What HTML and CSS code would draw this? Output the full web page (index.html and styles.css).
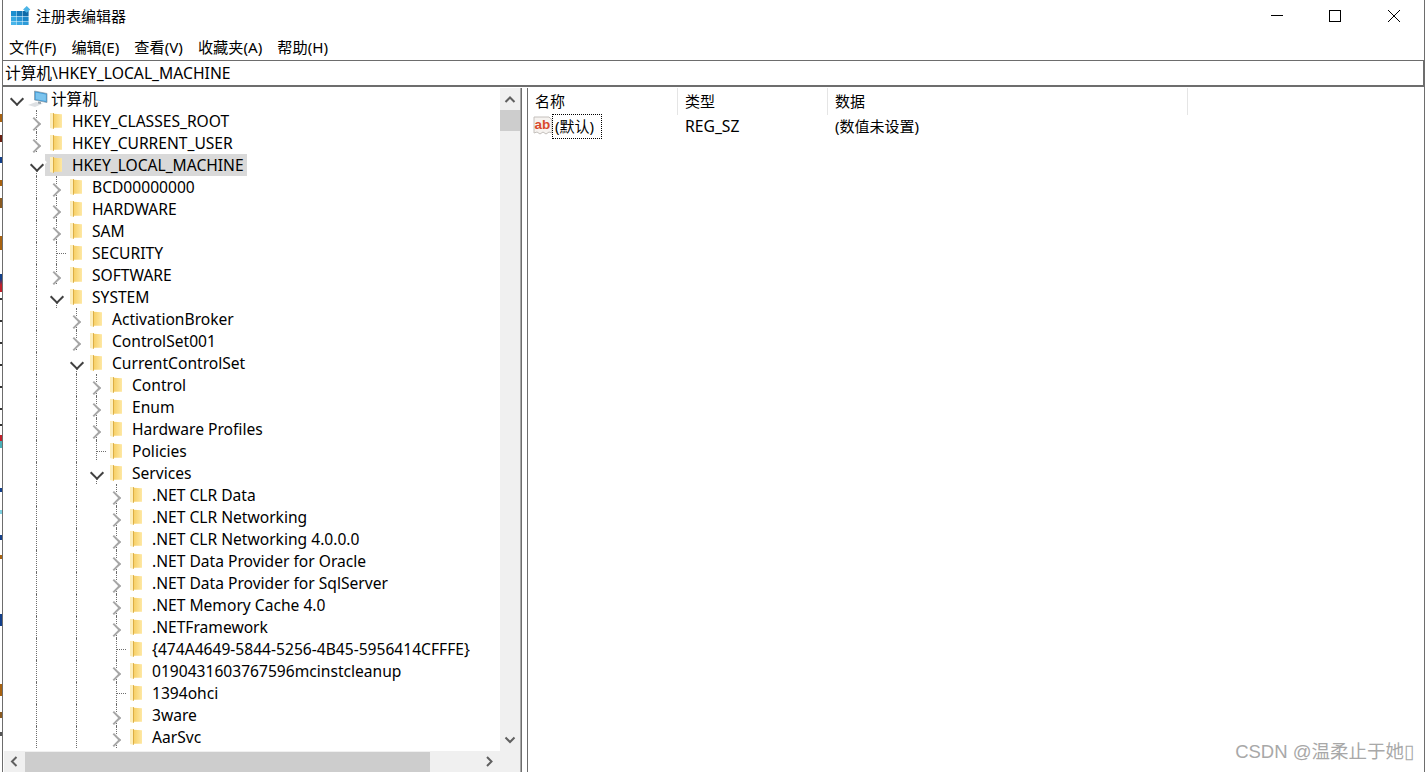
FILE: index.html
```html
<!DOCTYPE html>
<html lang="zh-CN">
<head>
<meta charset="utf-8">
<title>注册表编辑器</title>
<link rel="stylesheet" href="styles.css">
</head>
<body>
<div class="edge"></div>
<div class="window">
  <header class="titlebar">
    <svg class="app-icon" width="20" height="20" viewBox="0 0 20 20"><rect x="0" y="5" width="5.6" height="5" fill="#1a8fd0"/><rect x="6" y="5" width="5.6" height="5" fill="#1578b8"/><rect x="12" y="5" width="5.6" height="5" fill="#0f6aa8"/><rect x="0" y="10.5" width="5.6" height="4.6" fill="#34a7e0"/><rect x="6" y="10.5" width="5.6" height="4.6" fill="#2a96d6"/><rect x="12" y="10.5" width="5.6" height="4.6" fill="#1a86c8"/><rect x="0" y="15.5" width="5.6" height="3.5" fill="#47b5ea"/><rect x="6" y="15.5" width="5.6" height="3.5" fill="#3aa8e2"/><rect x="12" y="15.5" width="5.6" height="3.5" fill="#2c9ad8"/><path d="M15.7 0l3.6 3.4-3.6 3.4-3.6-3.4z" fill="#4db4e6"/></svg>
    <span class="title">注册表编辑器</span>
    <div class="controls">
      <svg width="12" height="12" viewBox="0 0 12 12"><path d="M0 5.5h12" stroke="#000" fill="none"/></svg>
      <svg width="12" height="12" viewBox="0 0 12 12"><rect x=".5" y=".5" width="11" height="11" stroke="#000" fill="none"/></svg>
      <svg class="close" width="12" height="12" viewBox="0 0 12 12"><path d="M0 0l12 12M12 0L0 12" stroke="#000" fill="none"/></svg>
    </div>
  </header>
  <nav class="menubar"><span>文件(F)</span><span>编辑(E)</span><span>查看(V)</span><span>收藏夹(A)</span><span>帮助(H)</span></nav>
  <div class="address">计算机\HKEY_LOCAL_MACHINE</div>
  <main class="panes">
    <section class="tree-pane">
      <div class="tree-col">
        <div class="tree">
          <div class="row"><span class="tog open"></span><svg class="pc" width="20" height="18" viewBox="0 0 20 18"><path d="M6.5 1l12.5 2.500v9L6.500 10z" fill="#3f9bd8" stroke="#8a98a4" stroke-width=".7"/><path d="M7.700 2.600l10.200 2v6.400L7.700 9.200z" fill="#7cc4ee"/><path d="M0 15l8-3 7 1.600-8 3.400z" fill="#dde0e3"/><path d="M10 11.500v2l3 .5v-2z" fill="#9aa5ad"/></svg><span class="lab root">计算机</span></div>
          <div class="row"><span class="g"></span><span class="tog closed"></span><span class="fold"></span><span class="lab">HKEY_CLASSES_ROOT</span></div>
          <div class="row"><span class="g"></span><span class="tog closed"></span><span class="fold"></span><span class="lab">HKEY_CURRENT_USER</span></div>
          <div class="row"><span class="g"></span><span class="tog open"></span><span class="item sel"><span class="fold"></span><span class="lab">HKEY_LOCAL_MACHINE</span></span></div>
          <div class="row"><span class="g"></span><span class="g v"></span><span class="tog closed"></span><span class="fold"></span><span class="lab">BCD00000000</span></div>
          <div class="row"><span class="g"></span><span class="g v"></span><span class="tog closed"></span><span class="fold"></span><span class="lab">HARDWARE</span></div>
          <div class="row"><span class="g"></span><span class="g v"></span><span class="tog closed"></span><span class="fold"></span><span class="lab">SAM</span></div>
          <div class="row"><span class="g"></span><span class="g v"></span><span class="tog leaf"></span><span class="fold"></span><span class="lab">SECURITY</span></div>
          <div class="row"><span class="g"></span><span class="g v"></span><span class="tog closed"></span><span class="fold"></span><span class="lab">SOFTWARE</span></div>
          <div class="row"><span class="g"></span><span class="g v"></span><span class="tog open"></span><span class="fold"></span><span class="lab">SYSTEM</span></div>
          <div class="row"><span class="g"></span><span class="g v"></span><span class="g"></span><span class="tog closed"></span><span class="fold"></span><span class="lab">ActivationBroker</span></div>
          <div class="row"><span class="g"></span><span class="g v"></span><span class="g"></span><span class="tog closed"></span><span class="fold"></span><span class="lab">ControlSet001</span></div>
          <div class="row"><span class="g"></span><span class="g v"></span><span class="g"></span><span class="tog open"></span><span class="fold"></span><span class="lab">CurrentControlSet</span></div>
          <div class="row"><span class="g"></span><span class="g v"></span><span class="g"></span><span class="g v"></span><span class="tog closed"></span><span class="fold"></span><span class="lab">Control</span></div>
          <div class="row"><span class="g"></span><span class="g v"></span><span class="g"></span><span class="g v"></span><span class="tog closed"></span><span class="fold"></span><span class="lab">Enum</span></div>
          <div class="row"><span class="g"></span><span class="g v"></span><span class="g"></span><span class="g v"></span><span class="tog closed"></span><span class="fold"></span><span class="lab">Hardware Profiles</span></div>
          <div class="row"><span class="g"></span><span class="g v"></span><span class="g"></span><span class="g v"></span><span class="tog leaf"></span><span class="fold"></span><span class="lab">Policies</span></div>
          <div class="row"><span class="g"></span><span class="g v"></span><span class="g"></span><span class="g v"></span><span class="tog open"></span><span class="fold"></span><span class="lab">Services</span></div>
          <div class="row"><span class="g"></span><span class="g v"></span><span class="g"></span><span class="g v"></span><span class="g"></span><span class="tog closed"></span><span class="fold"></span><span class="lab">.NET CLR Data</span></div>
          <div class="row"><span class="g"></span><span class="g v"></span><span class="g"></span><span class="g v"></span><span class="g"></span><span class="tog closed"></span><span class="fold"></span><span class="lab">.NET CLR Networking</span></div>
          <div class="row"><span class="g"></span><span class="g v"></span><span class="g"></span><span class="g v"></span><span class="g"></span><span class="tog closed"></span><span class="fold"></span><span class="lab">.NET CLR Networking 4.0.0.0</span></div>
          <div class="row"><span class="g"></span><span class="g v"></span><span class="g"></span><span class="g v"></span><span class="g"></span><span class="tog closed"></span><span class="fold"></span><span class="lab">.NET Data Provider for Oracle</span></div>
          <div class="row"><span class="g"></span><span class="g v"></span><span class="g"></span><span class="g v"></span><span class="g"></span><span class="tog closed"></span><span class="fold"></span><span class="lab">.NET Data Provider for SqlServer</span></div>
          <div class="row"><span class="g"></span><span class="g v"></span><span class="g"></span><span class="g v"></span><span class="g"></span><span class="tog closed"></span><span class="fold"></span><span class="lab">.NET Memory Cache 4.0</span></div>
          <div class="row"><span class="g"></span><span class="g v"></span><span class="g"></span><span class="g v"></span><span class="g"></span><span class="tog closed"></span><span class="fold"></span><span class="lab">.NETFramework</span></div>
          <div class="row"><span class="g"></span><span class="g v"></span><span class="g"></span><span class="g v"></span><span class="g"></span><span class="tog leaf"></span><span class="fold"></span><span class="lab">{474A4649-5844-5256-4B45-5956414CFFFE}</span></div>
          <div class="row"><span class="g"></span><span class="g v"></span><span class="g"></span><span class="g v"></span><span class="g"></span><span class="tog closed"></span><span class="fold"></span><span class="lab">0190431603767596mcinstcleanup</span></div>
          <div class="row"><span class="g"></span><span class="g v"></span><span class="g"></span><span class="g v"></span><span class="g"></span><span class="tog leaf"></span><span class="fold"></span><span class="lab">1394ohci</span></div>
          <div class="row"><span class="g"></span><span class="g v"></span><span class="g"></span><span class="g v"></span><span class="g"></span><span class="tog closed"></span><span class="fold"></span><span class="lab">3ware</span></div>
          <div class="row"><span class="g"></span><span class="g v"></span><span class="g"></span><span class="g v"></span><span class="g"></span><span class="tog closed"></span><span class="fold"></span><span class="lab">AarSvc</span></div>
        </div>
        <div class="hscroll">
          <svg width="21" height="21" viewBox="0 0 21 21"><path d="M12.500 6l-4.500 4.500 4.500 4.500" stroke="#606060" stroke-width="2" fill="none"/></svg>
          <div class="hthumb"></div>
          <div class="spacer"></div>
          <svg width="21" height="21" viewBox="0 0 21 21"><path d="M8 6l4.500 4.500L8 15" stroke="#606060" stroke-width="2" fill="none"/></svg>
        </div>
      </div>
      <div class="vscroll">
        <svg width="20" height="22" viewBox="0 0 20 22"><path d="M5.500 14l4.500-4.500 4.500 4.500" stroke="#606060" stroke-width="2" fill="none"/></svg>
        <div class="vthumb"></div>
        <div class="spacer"></div>
        <svg width="20" height="22" viewBox="0 0 20 22"><path d="M5.500 8.500l4.500 4.500 4.500-4.500" stroke="#606060" stroke-width="2" fill="none"/></svg>
        <div class="corner"></div>
      </div>
    </section>
    <div class="sash"></div>
    <section class="list-pane">
      <div class="list-head"><span class="col">名称</span><span class="col">类型</span><span class="col wide">数据</span></div>
      <div class="list-row">
        <svg class="ab" width="20" height="20" viewBox="0 0 20 20"><path d="M1 1h15l3 3v13l-3-1-3 2-3-2-3 2-3-2-3 1z" fill="#f6f3f0" stroke="#c4c0bc"/><text x="1.500" y="13" class="ab-text">ab</text></svg>
        <span class="focus">(默认)</span>
        <span class="type">REG_SZ</span>
        <span class="data">(数值未设置)</span>
      </div>
      <div class="watermark">CSDN @温柔止于她&#9647;</div>
    </section>
  </main>
</div>
</body>
</html>
```
FILE: styles.css
```css
* { box-sizing: border-box; }
html, body { margin: 0; height: 100%; overflow: hidden; background: #fff; }
body { display: flex; font: 15.6px/22px "Noto Sans", "Noto Sans CJK SC", sans-serif; color: #000; }
.edge { width: 2px; flex: none; background: linear-gradient(#fff 0 114px, #a8620f 114px 122px, #fff 122px 135px, #6a1f10 135px 142px, #fff 142px 157px, #123f8a 157px 163px, #fff 163px 180px, #a8620f 180px 186px, #fff 186px 198px, #8a5a20 198px 208px, #fff 208px 236px, #a8620f 236px 250px, #fff 250px 274px, #123f8a 274px 279px, #c0202a 285px 292px, #fff 292px 298px, #333 298px 300px, #fff 300px 320px, #333 320px 322px, #fff 322px 342px, #333 342px 344px, #fff 344px 364px, #333 364px 366px, #fff 366px 386px, #333 386px 388px, #fff 388px 408px, #333 408px 410px, #fff 410px 424px, #333 424px 426px, #fff 426px 435px, #c0202a 435px 441px, #4ab0b8 441px 448px, #fff 448px 488px, #123f8a 488px 492px, #fff 492px 510px, #7fd0e0 510px 514px, #fff 514px 535px, #123f8a 535px 540px, #fff 540px 555px, #a8620f 555px 559px, #fff 559px 614px, #123f8a 614px 626px, #fff 626px 684px, #a8620f 684px 696px, #fff 696px 712px, #8a5a20 712px 718px, #fff 718px 732px, #555 732px 736px, #fff 736px); }
.window { width: 1423px; height: 772px; flex: none; display: flex; flex-direction: column; border-right: 1px solid #6d6d6d; border-left: 1px solid #6d6d6d; background: #fff; }
.titlebar { height: 34px; display: flex; align-items: center; padding: 0 0 2px 8px; }
.app-icon { margin-right: 5px; }
.title { font-size: 15px; }
.controls { margin-left: auto; display: flex; align-items: center; gap: 46px; padding: 0 24px 1px 0; }
.close { margin-left: 1px; }
.menubar { height: 26px; display: flex; gap: 15px; padding: 2px 0 0 6px; font-size: 15.2px; }
.address { height: 26px; border: 1px solid #6d6d6d; border-left: 0; line-height: 25px; padding-left: 2px; font-size: 15.7px; }
.panes { flex: 1; min-height: 0; display: flex; border-top: 2px solid #6d6d6d; margin-top: -1px; padding-top: 1px; }
.tree-pane { width: 518px; flex: none; display: flex; border-right: 1px solid #a8a8a8; overflow: hidden; }
.tree-col { flex: 1; min-width: 0; display: flex; flex-direction: column; }
.tree { flex: 1; min-height: 0; overflow: hidden; padding-left: 3px; }
.row { height: 22px; display: flex; align-items: center; white-space: nowrap; }
.g, .tog { width: 20px; height: 22px; flex: none; position: relative; }
.g.v::before, .tog::before { content: ""; position: absolute; left: 10px; top: 0; height: 100%; border-left: 1px dotted #6e6e6e; }
.tog.closed::after { content: ""; position: absolute; left: 3px; top: 8.5px; width: 8px; height: 8px; border-top: 2px solid #a6a6a6; border-right: 2px solid #a6a6a6; transform: rotate(45deg); box-shadow: -2px 2px 0 2px #fff; background: #fff; }
.tog.open::after { content: ""; position: absolute; left: 5.5px; top: 6.4px; width: 8px; height: 8px; border-bottom: 2px solid #404040; border-right: 2px solid #404040; transform: rotate(45deg); box-shadow: -2px -2px 0 2px #fff; background: #fff; }
.tog.leaf::after { content: ""; position: absolute; left: 11px; top: 11px; width: 9px; border-top: 1px dotted #6e6e6e; }
.tog.open:first-child::before { display: none; }
.fold { width: 12px; height: 16px; flex: none; margin-left: 4px; background: linear-gradient(to right, #fdeebc 0 26%, #dcae44 26% 32%, #f7d066 32%, #fee8a4 100%); clip-path: polygon(0 0, 32% 0, 32% 4%, 100% 8%, 100% 92%, 32% 92%, 32% 100%, 0 94%); }
.lab { margin-left: 10px; }
.lab.root { margin-left: 3px; }
.item { display: flex; align-items: center; margin-left: -1px; padding: 0 3px 0 1px; height: 22px; }
.sel { background: #d9d9d9; }
.pc { flex: none; margin-left: 2px; }
.vscroll { width: 20px; flex: none; background: #f0f0f0; display: flex; flex-direction: column; }
.vthumb { height: 21px; flex: none; background: #cdcdcd; }
.spacer { flex: 1; }
.corner { height: 21px; flex: none; }
.hscroll { height: 21px; flex: none; margin-left: 1px; background: #f0f0f0; display: flex; align-items: center; }
.hthumb { width: 405px; height: 20px; background: #cdcdcd; }
.sash { width: 6px; flex: none; border-left: 1px solid #6d6d6d; }
.list-pane { flex: 1; min-width: 0; position: relative; border-left: 1px solid #6d6d6d; }
.list-head { height: 27px; display: flex; }
.col { width: 150px; padding-left: 7px; border-right: 1px solid #e5e5e5; line-height: 27px; font-size: 15px; }
.col.wide { width: 360px; }
.list-row { height: 22px; display: flex; align-items: center; padding-left: 5px; font-size: 15px; }
.ab { flex: none; }
.ab-text { font: bold 13.5px "Liberation Sans", sans-serif; fill: #d9482b; }
.focus { outline: 1px dotted #000; width: 48px; padding-left: 2px; margin-right: 84px; line-height: 23px; }
.type { width: 150px; font-size: 15.7px; }
.watermark { position: absolute; right: 10px; bottom: 8px; font: 18.500px/24px "Liberation Sans", "Noto Sans CJK SC", sans-serif; color: #a8a8a8; }
```
